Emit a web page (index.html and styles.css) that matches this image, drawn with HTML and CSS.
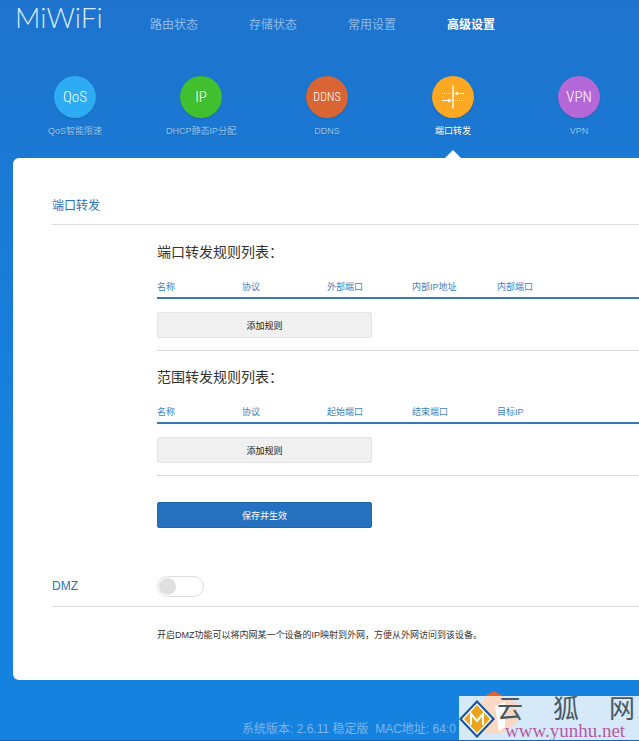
FILE: index.html
```html
<!DOCTYPE html>
<html lang="zh-CN">
<head>
  <meta charset="UTF-8" />
  <meta name="viewport" content="width=device-width, initial-scale=1.0"/>
  <title>MiWiFi - 端口转发</title>
  <link rel="stylesheet" href="styles.css">
</head>
<body>

  <header class="header">
    <a class="logo" href="#">MiWiFi</a>
    <nav class="nav">
      <a href="#">路由状态</a>
      <a href="#">存储状态</a>
      <a href="#">常用设置</a>
      <a href="#" class="active">高级设置</a>
    </nav>
  </header>

  <nav class="tabs">
    <a href="#" class="tab">
      <span class="circle qos">QoS</span>
      <span>QoS智能限速</span>
    </a>
    <a href="#" class="tab">
      <span class="circle ip">IP</span>
      <span>DHCP静态IP分配</span>
    </a>
    <a href="#" class="tab">
      <span class="circle ddns">DDNS</span>
      <span>DDNS</span>
    </a>
    <a href="#" class="tab active">
      <span class="circle port">
        <svg width="24" height="24" viewBox="0 0 24 24" fill="none" stroke="#fff">
          <path d="M12 0.5v23" stroke-width="1.4"/>
          <path d="M16 8.500h7M1 15.500h7"/>
          <path d="M1 8.500h10M14 15.500h9" stroke-dasharray="1 1" opacity=".75"/>
          <path d="M13 8.500l4-2v4zM11 15.500l-4-2v4z" fill="#fff" stroke="none"/>
        </svg>
      </span>
      <span>端口转发</span>
    </a>
    <a href="#" class="tab">
      <span class="circle vpn">VPN</span>
      <span>VPN</span>
    </a>
  </nav>

  <main class="panel">
    <section>
      <div class="title"><h2>端口转发</h2></div>
      <div class="content">
        <div class="rules">
          <h3>端口转发规则列表：</h3>
          <table>
            <thead>
              <tr><th>名称</th><th>协议</th><th>外部端口</th><th>内部IP地址</th><th>内部端口</th></tr>
            </thead>
          </table>
          <button type="button" class="btn">添加规则</button>
        </div>
        <div class="rules">
          <h3>范围转发规则列表：</h3>
          <table>
            <thead>
              <tr><th>名称</th><th>协议</th><th>起始端口</th><th>结束端口</th><th>目标IP</th></tr>
            </thead>
          </table>
          <button type="button" class="btn">添加规则</button>
        </div>
        <button type="button" class="btn save">保存并生效</button>
      </div>
    </section>

    <section class="dmz">
      <div class="title">
        <h2><label for="dmz">DMZ</label></h2>
        <input type="checkbox" id="dmz" class="switch">
      </div>
      <p class="note">开启DMZ功能可以将内网某一个设备的IP映射到外网，方便从外网访问到该设备。</p>
    </section>
  </main>

  <footer class="footer">
    <p>系统版本: 2.6.11 稳定版&nbsp; MAC地址: 64:0</p>
    <div class="watermark">
      <svg class="flame" width="54" height="49" viewBox="0 0 54 49">
        <path d="M18 5L27 0l9 5z" fill="#e9602c"/>
        <path d="M18 5h18l14 7v20L34 43H20L10 20z" fill="#f9d9c5"/>
        <path d="M28 15l10-4v25l-6 4z" fill="#fff"/>
      </svg>
      <svg class="badge" width="36" height="38" viewBox="0 0 36 38">
        <path d="M18 1.500L34.500 19 18 36.500 1.500 19z" fill="#fff" stroke="#1c579b" stroke-width="2.200"/>
        <path d="M18 5L31 19 18 33 5 19z" fill="#eaa51c"/>
        <path d="M12 25V14l6 7 6-7v11" fill="none" stroke="#fff" stroke-width="2"/>
      </svg>
      <div class="name"><span>云</span><span>狐</span><span>网</span></div>
      <span class="site">www.yunhu.net</span>
    </div>
  </footer>

</body>
</html>
```

FILE: styles.css
```css
* {
  box-sizing: border-box;
}

body {
  margin: 0;
  min-height: 100vh;
  display: flex;
  flex-direction: column;
  font-family: "Liberation Sans", "Noto Sans CJK SC", sans-serif;
  font-size: 9px;
  color: #333;
  background: linear-gradient(#1e73cd, #1a79d3 160px, #1682df 480px);
  border-bottom: 1px solid #1763b4;
  overflow-x: hidden;
}

a {
  color: inherit;
  text-decoration: none;
}

h2, h3, p {
  margin: 0;
  font-weight: normal;
}

.header {
  display: flex;
  height: 76px;
  padding-left: 15px;
}

.logo {
  width: 135px;
  font-family: "Lato Light", Lato, sans-serif;
  font-weight: 300;
  font-size: 28px;
  line-height: 34px;
  color: #d5eaff;
}

.nav {
  display: flex;
  gap: 51px;
  padding-top: 15px;
  font-size: 12px;
  line-height: 20px;
  color: #8dbbe8;
  white-space: nowrap;
}

.nav .active {
  color: #fff;
  font-weight: bold;
}

.tabs {
  display: flex;
  height: 82px;
  padding-left: 12px;
}

.tab {
  position: relative;
  flex: 0 0 126px;
  display: flex;
  flex-direction: column;
  align-items: center;
  gap: 6px;
  line-height: 14px;
  color: #9cc5ed;
  text-shadow: 0 1px 1px rgba(0, 0, 0, .2);
}

.tab.active {
  color: #fff;
}

/* pointer into the panel */
.tab.active::after {
  content: "";
  position: absolute;
  bottom: 0;
  border: 8px solid transparent;
  border-top: 0;
  border-bottom-color: #fff;
}

.circle {
  display: flex;
  align-items: center;
  justify-content: center;
  width: 42px;
  height: 42px;
  border-radius: 50%;
  font-family: "Liberation Sans Narrow", "Roboto Condensed", Roboto, sans-serif;
  font-size: 15px;
  font-weight: 300;
  color: #fff;
  text-shadow: none;
  box-shadow: 0 1px 2px rgba(0, 0, 0, .15);
}

.qos { background: #2dabf3; }
.ip { background: #41bf2e; }
.ddns { background: #d96534; font-size: 12px; }
.port { background: #fca823; }
.vpn { background: #b569d9; }

.panel {
  margin-left: 13px;
  padding: 36px 0 37px 39px;
  background: #fff;
  border-radius: 6px 0 0 6px;
}

.title {
  display: flex;
  align-items: center;
  height: 31px;
  padding-bottom: 10px;
  border-bottom: 1px solid #ddd;
}

.title h2 {
  width: 105px;
  font-size: 12px;
  color: #2b73b9;
}

.content {
  padding: 1px 0 0 105px;
}

.rules {
  padding: 16px 0 12px;
  border-bottom: 1px solid #d9d9d9;
}

.rules h3 {
  font-size: 14px;
  line-height: 20px;
}

table {
  width: 100%;
  margin: 17px 0 13px;
  table-layout: fixed;
  border-collapse: collapse;
  border-bottom: 2px solid #3a78b5;
}

th {
  width: 85px;
  height: 19px;
  padding: 0 0 3px;
  font-weight: normal;
  text-align: left;
  color: #3b7fc2;
}

th:last-child {
  width: auto;
}

.btn {
  display: block;
  width: 215px;
  height: 26px;
  padding: 0;
  font: inherit;
  color: #222;
  background: #f0f0f0;
  border: 1px solid #e4e4e4;
  border-radius: 2px;
  cursor: pointer;
}

.save {
  margin-top: 26px;
  color: #fff;
  background: #2672be;
  border-color: #1f66ae;
}

.dmz {
  margin-top: 48px;
}

.note {
  padding: 20px 0 0 105px;
  line-height: 16px;
}

.switch {
  appearance: none;
  width: 47px;
  height: 21px;
  margin: 0;
  padding: 1px;
  border: 1px solid #ddd;
  border-radius: 11px;
  cursor: pointer;
}

.switch::before {
  content: "";
  display: block;
  width: 17px;
  height: 17px;
  border-radius: 50%;
  background: #e0e0e0;
}

.switch:checked::before {
  margin-left: auto;
  background: #2672be;
}

.footer {
  position: relative;
  flex: 1;
  min-height: 60px;
  padding: 40px 0 0 242px;
  font-size: 12px;
  line-height: 18px;
  color: #78b6ee;
  white-space: nowrap;
}

.watermark {
  position: absolute;
  right: 0;
  bottom: 0;
  display: flex;
  flex-direction: column;
  width: 180px;
  height: 44px;
  padding-left: 38px;
  background: #d5e9f8;
}

.flame,
.badge {
  position: absolute;
}

.flame {
  left: 8px;
  bottom: 0;
}

.badge {
  left: 0;
  top: 4px;
}

.name,
.site {
  position: relative;
}

.name {
  display: flex;
  justify-content: space-between;
  padding-right: 4px;
  font-size: 26px;
  line-height: 26px;
  color: #4b5963;
}

.site {
  padding-left: 8px;
  font-family: "Liberation Serif", serif;
  font-size: 19px;
  line-height: 18px;
  color: #b65aa5;
}
```
